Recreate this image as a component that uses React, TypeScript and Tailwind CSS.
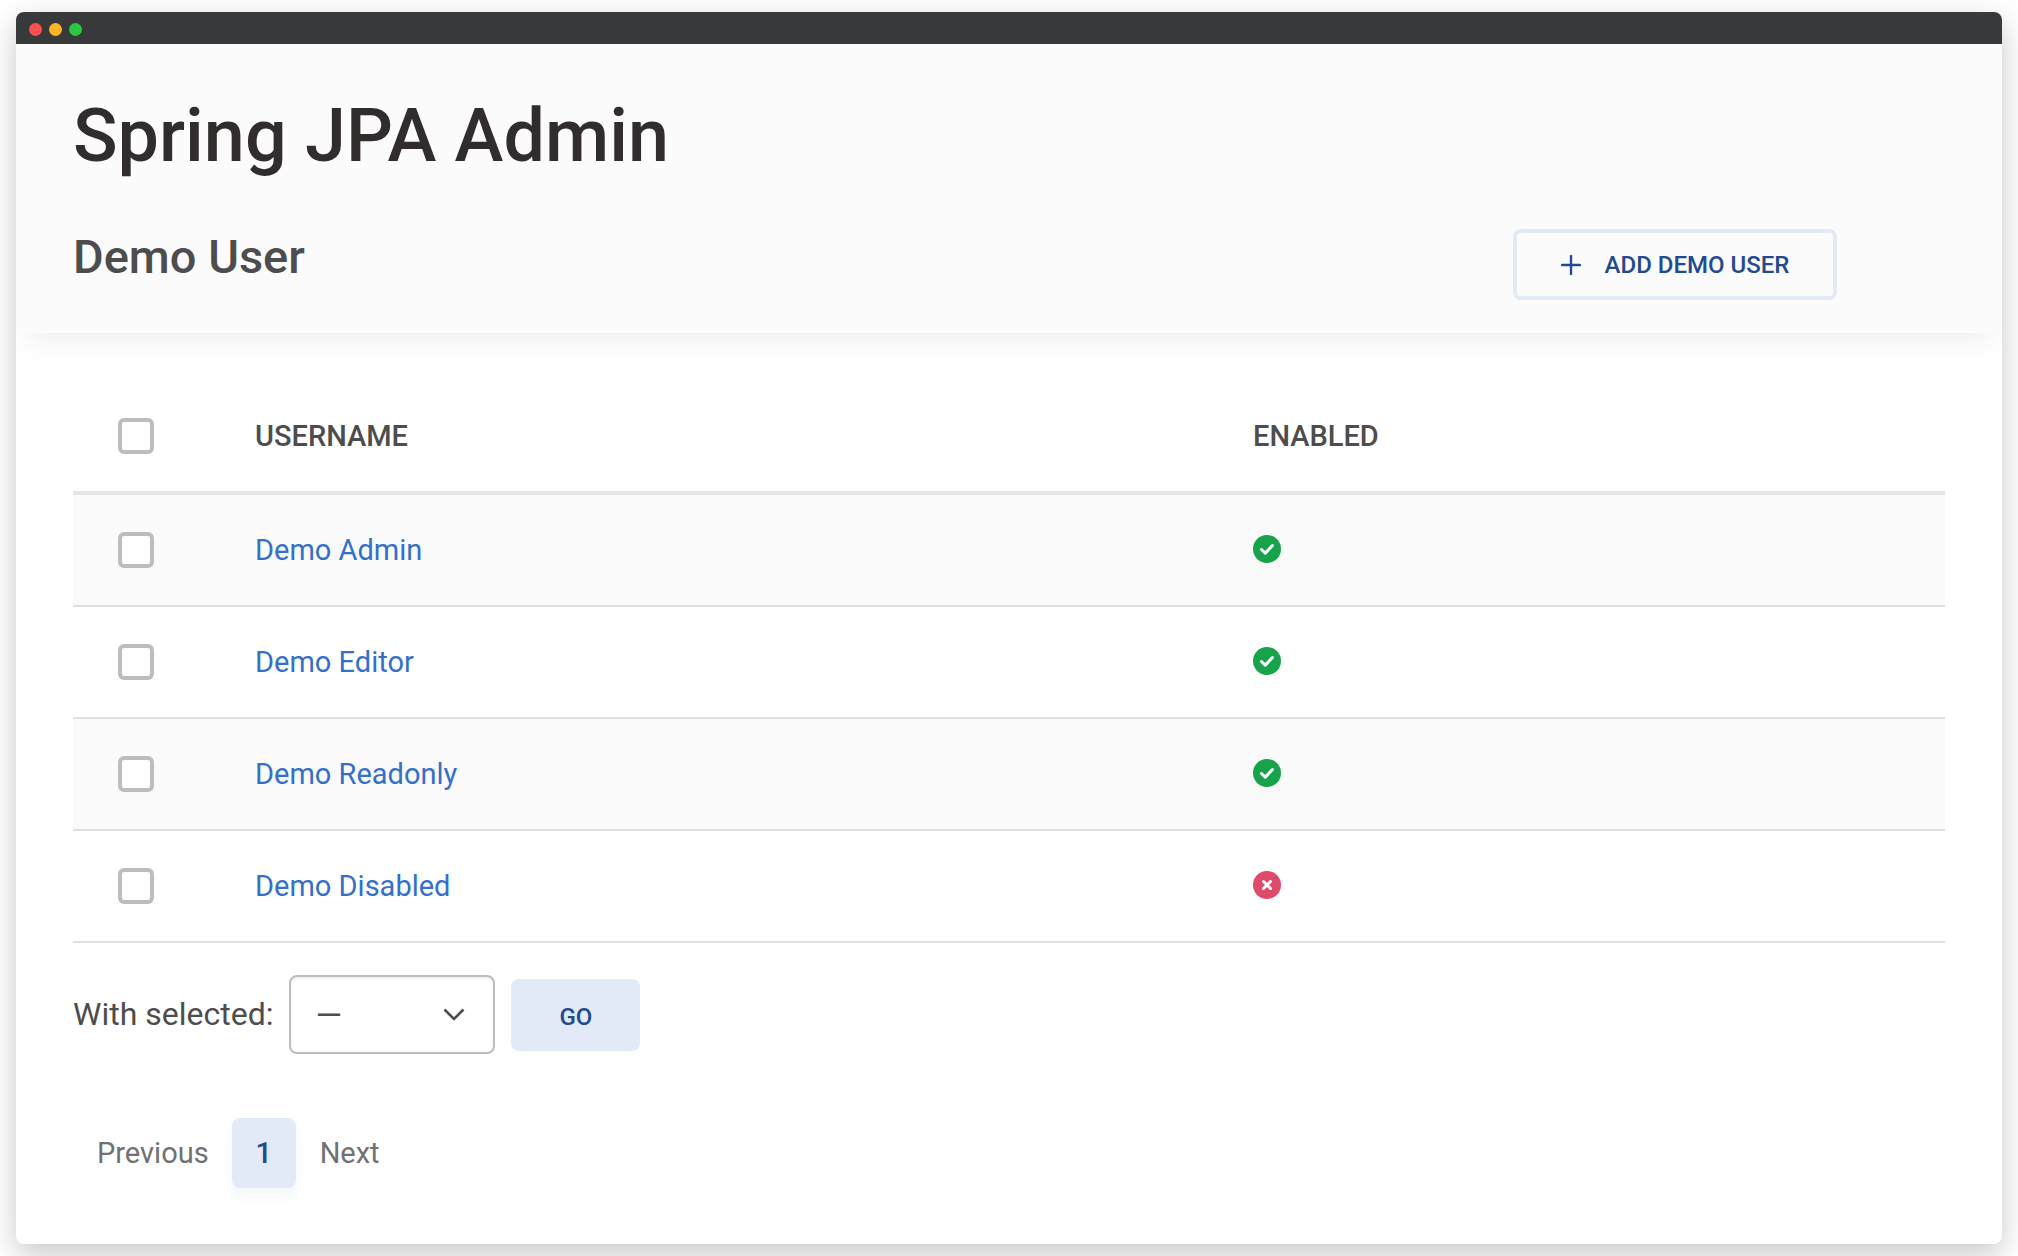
const rows = [
  { name: 'Demo Admin', enabled: true },
  { name: 'Demo Editor', enabled: true },
  { name: 'Demo Readonly', enabled: true },
  { name: 'Demo Disabled', enabled: false },
];

function Checkbox() {
  return <span className="block w-9 h-9 rounded-md border-4 border-[#bdbdbd] bg-white" />;
}

function StatusIcon({ enabled }: { enabled: boolean }) {
  if (enabled) {
    return (
      <svg viewBox="0 0 28 28" className="w-7 h-7 block mb-0.5">
        <circle cx="14" cy="14" r="14" fill="#16a34a" />
        <path d="M8.5 14.5l3.8 3.6 7.2-7.6" fill="none" stroke="#fff" strokeWidth="3" strokeLinecap="round" strokeLinejoin="round" />
      </svg>
    );
  }
  return (
    <svg viewBox="0 0 28 28" className="w-7 h-7 block mb-0.5">
      <circle cx="14" cy="14" r="14" fill="#e04a6a" />
      <path d="M10.5 10.5l7 7M17.5 10.5l-7 7" fill="none" stroke="#fff" strokeWidth="3" strokeLinecap="round" />
    </svg>
  );
}

export default function App() {
  return (
    <div className="h-screen bg-white pt-3 pl-4 pr-4 font-['Roboto',sans-serif] overflow-hidden">
      <div className="h-[1232px] rounded-lg bg-white shadow-[0_10px_30px_rgba(0,0,0,0.22)] overflow-hidden">
        {/* title bar */}
        <div className="h-8 bg-[#38393b] flex items-center gap-[7px] pl-[13px] pt-0.5">
          <span className="w-[13px] h-[13px] rounded-full bg-[#fd5050]" />
          <span className="w-[13px] h-[13px] rounded-full bg-[#fbb42a]" />
          <span className="w-[13px] h-[13px] rounded-full bg-[#28c940]" />
        </div>

        {/* header */}
        <div className="relative h-[289px] bg-[#fbfbfb] px-[57px] shadow-[0_20px_25px_-10px_rgba(0,0,0,0.06)]">
          <h1 className="pt-[49px] text-[73.7px] leading-[86px] font-medium text-[#322d2d]">Spring JPA Admin</h1>
          <div className="flex items-start justify-between pr-[108px]">
            <h2 className="mt-[50px] text-[47px] leading-[56px] font-medium text-[#4d4d4d]">Demo User</h2>
            <button className="mt-[50px] w-[324px] h-[71px] rounded-lg border-4 border-[#e3eaf7] pt-px flex items-center justify-center gap-[24px] text-[24px] font-medium text-[#234a8f]">
              <svg viewBox="0 0 20 20" className="w-5 h-5"><path d="M10 1v18M1 10h18" stroke="#234a8f" strokeWidth="2.4" strokeLinecap="round" /></svg>
              ADD DEMO USER
            </button>
          </div>
        </div>

        {/* table */}
        <div className="px-[57px] pt-[47px]">
          <div className="flex items-center h-[111px]">
            <div className="w-[182px] pl-[45px]"><Checkbox /></div>
            <div className="w-[998px] pt-0.5 text-[29px] font-medium text-[#4d4d4d]">USERNAME</div>
            <div className="pt-0.5 text-[29px] font-medium text-[#4d4d4d]">ENABLED</div>
          </div>
          <div className="h-1 bg-[#e5e5e5]" />
          {rows.map((row, i) => (
            <div key={row.name} className={`flex items-center h-[112px] border-b-2 border-[#e0e0e0] ${i % 2 === 0 ? 'bg-[#fafafa]' : 'bg-white'}`}>
              <div className="w-[182px] pl-[45px]"><Checkbox /></div>
              <div className="w-[998px] pt-0.5 text-[29px] text-[#3470c9]">{row.name}</div>
              <StatusIcon enabled={row.enabled} />
            </div>
          ))}

          {/* bulk actions */}
          <div className="flex items-center mt-[32px]">
            <span className="pb-0.5 text-[32px] text-[#4d4d4d]">With selected:</span>
            <div className="ml-4 w-[206px] h-[79px] rounded-lg border-2 border-[#bdbdbd] bg-white shadow-[inset_0_2px_2px_rgba(0,0,0,0.06)] flex items-center justify-between pl-6 pr-[28px]">
              <span className="text-[34px] leading-none text-[#4d4d4d]">—</span>
              <svg viewBox="0 0 22 13" className="w-[22px] h-[13px]"><path d="M1.5 1.5L11 11l9.5-9.5" fill="none" stroke="#4d4d4d" strokeWidth="2.6" /></svg>
            </div>
            <button className="ml-4 w-[129px] h-[72px] rounded-lg bg-[#e3eaf7] pt-1 text-[24px] font-medium text-[#234a8f]">GO</button>
          </div>

          {/* pagination */}
          <div className="flex items-center mt-[64px] text-[29px] text-[#717171]">
            <span className="ml-6 pt-0.5">Previous</span>
            <span className="ml-[23px] w-16 h-[70px] pt-0.5 rounded-lg bg-[#e3eaf7] flex items-center justify-center font-medium text-[#234a8f] shadow-[0_8px_12px_rgba(35,74,143,0.05)]">1</span>
            <span className="ml-6 pt-0.5">Next</span>
          </div>
        </div>
      </div>
    </div>
  );
}
